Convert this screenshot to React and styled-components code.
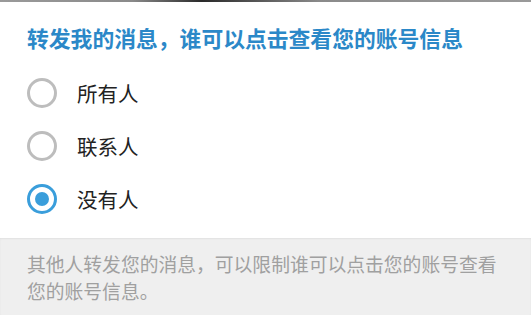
import React, { useState } from "react";
import styled, { createGlobalStyle } from "styled-components";

const Global = createGlobalStyle`
  html, body { margin: 0; padding: 0; background: #ffffff; }
  body { font-family: "Noto Sans CJK SC", "Noto Sans", sans-serif; }
  * { box-sizing: border-box; }
`;

const Page = styled.div`
  width: 531px;
  height: 315px;
  display: flex;
  flex-direction: column;
  background: #ffffff;
  overflow: hidden;
`;

const TopEdge = styled.div`
  height: 2px;
  background: linear-gradient(
    to right,
    #9a9a9a 0%,
    #8a8a8a 25%,
    #2a2a2a 38%,
    #555 48%,
    #8a8a8a 60%,
    #9a9a9a 100%
  );
`;

const Title = styled.h2`
  margin: 0;
  padding: 21px 0 0 27px;
  font-size: 21.8px;
  line-height: 30px;
  font-weight: 700;
  color: #2b88c8;
  white-space: nowrap;
`;

const Options = styled.div`
  display: flex;
  flex-direction: column;
  margin-top: 13px;
  margin-bottom: 13px;
`;

const Row = styled.label`
  height: 53px;
  display: flex;
  align-items: center;
  gap: 20px;
  padding-left: 27px;
  cursor: pointer;
`;

const Ring = styled.span`
  width: 30px;
  height: 30px;
  border-radius: 50%;
  border: 3px solid ${(p) => (p.$checked ? "#3a9edb" : "#bdbdbd")};
  display: flex;
  align-items: center;
  justify-content: center;
  flex-shrink: 0;
`;

const Dot = styled.span`
  width: 14px;
  height: 14px;
  border-radius: 50%;
  background: #3a9edb;
`;

const Label = styled.span`
  font-size: 20.5px;
  line-height: 30px;
  color: #222222;
`;

const Footer = styled.div`
  flex: 1;
  background: #efefef;
  box-shadow: inset 0 1px 2px rgba(0, 0, 0, 0.06);
  padding: 12px 27px 0 27px;
  font-size: 18.8px;
  line-height: 27px;
  color: #a0a0a0;
`;

const options = ["所有人", "联系人", "没有人"];

export default function App() {
  const [selected, setSelected] = useState(2);
  return (
    <>
      <Global />
      <Page>
        <TopEdge />
        <Title>转发我的消息，谁可以点击查看您的账号信息</Title>
        <Options>
          {options.map((o, i) => (
            <Row key={o} onClick={() => setSelected(i)}>
              <Ring $checked={selected === i}>{selected === i && <Dot />}</Ring>
              <Label>{o}</Label>
            </Row>
          ))}
        </Options>
        <Footer>
          其他人转发您的消息，可以限制谁可以点击您的账号查看您的账号信息。
        </Footer>
      </Page>
    </>
  );
}
